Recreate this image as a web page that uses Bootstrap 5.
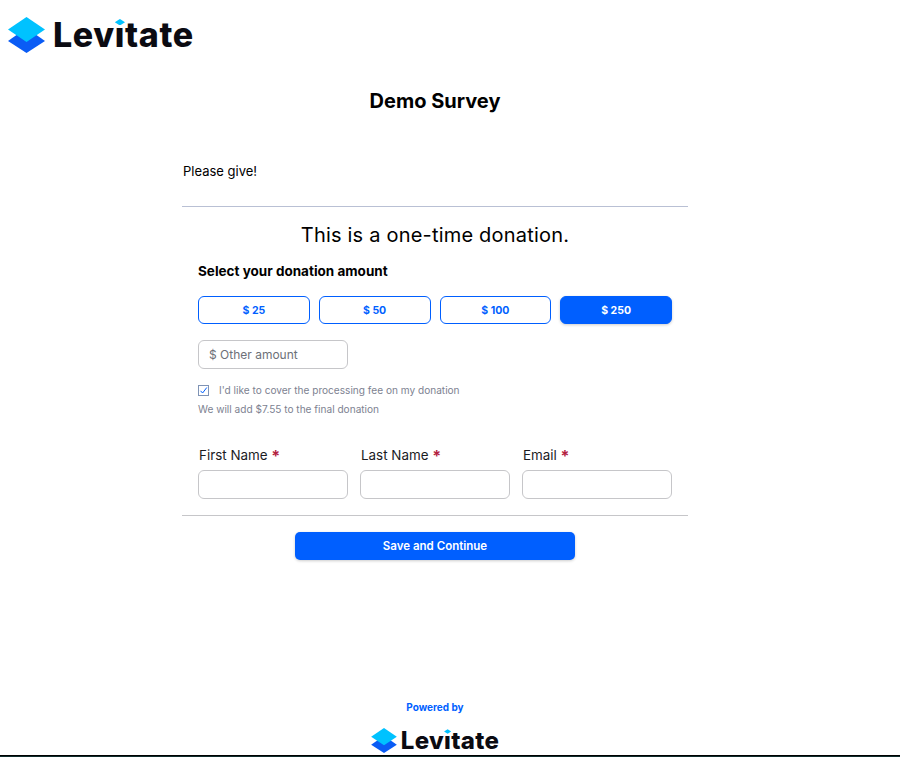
<!DOCTYPE html>
<html lang="en">
<head>
    <meta charset="UTF-8">
    <meta name="viewport" content="width=device-width, initial-scale=1.0">
    <title>Demo Survey</title>
    <link href="https://cdn.jsdelivr.net/npm/bootstrap@5.3.0/dist/css/bootstrap.min.css" rel="stylesheet">
    <style>
        html, body { height: 757px; overflow: hidden; }
        body { background: #fff; color: #000; font-family: "Inter", "Liberation Sans", sans-serif; }
        .page-wrap { width: 870px; height: 755px; }
        .top-logo { padding: 17px 0 0 8px; height: 72px; gap: 8px; }
        .top-logo svg { width: 37px; height: 36px; }
        .logo-word { font-weight: 800; color: #0b0b12; line-height: 1; letter-spacing: .6px; }
        .top-logo .logo-word { font-size: 34px; margin-top: 1px; }
        .logo-i { position: relative; display: inline-block; }
        .logo-i::before { content: ""; position: absolute; left: -1px; right: -1px; top: .02em; height: .24em; background: #fff; }
        .logo-i::after { content: ""; position: absolute; left: 50%; top: .03em; width: .3em; height: .19em; margin-left: -.15em; background: #00c2ff; clip-path: polygon(50% 0, 100% 50%, 50% 100%, 0 50%); }
        .survey-title { font-size: 20px; font-weight: 700; line-height: 24px; margin: 17px 0 0; text-align: center; }
        .survey-col { width: 506px; margin: 0 auto; }
        .intro-text { font-size: 13px; line-height: 17px; margin: 50px 0 26px 1px; }
        .rule-top { border-top: 1px solid #b9c0d4; }
        .once-text { font-size: 20px; line-height: 24px; text-align: center; margin: 16px 0 0; letter-spacing: .2px; }
        .form-body { padding: 0 16px; }
        .select-label { font-size: 13.5px; font-weight: 700; line-height: 16px; margin: 16px 0 17px; }
        .amount-row { gap: 9px; }
        .amount-btn { flex: 1; height: 28px; padding: 1px 0 0; font-size: 10.5px; font-weight: 700; color: #005fff; background: #fff; border: 1px solid #005fff; border-radius: 6px; }
        .amount-btn.picked { background: #005fff; color: #fff; box-shadow: 0 1px 3px rgba(0,0,0,.2); }
        .field-box { height: 29px; border: 1px solid #c6c6c9; border-radius: 6px; font-size: 12px; padding: 0 10px; box-shadow: none; }
        .field-box::placeholder { color: #6d7078; opacity: 1; }
        .other-box { width: 150px; margin-top: 16px; }
        .fee-row { margin-top: 14px; gap: 10px; font-size: 10.1px; line-height: 14px; color: #7d8291; }
        .fee-check { width: 11px; height: 11px; border: 1px solid #7f93b5; display: flex; }
        .fee-note { font-size: 10.1px; line-height: 14px; color: #7d8291; margin: 5px 0 0; }
        .name-row { margin-top: 30px; gap: 12px; }
        .name-row > div { flex: 1; }
        .name-label { display: block; font-size: 13.4px; line-height: 18px; margin-bottom: 6px; color: #1b1b1f; padding-left: 1px; }
        .req-star { color: #b3213f; font-weight: 700; font-size: 16px; line-height: 1; vertical-align: -2px; }
        .rule-bottom { border-top: 1px solid #c6c6c9; margin-top: 16px; }
        .save-btn { display: block; width: 280px; height: 28px; margin: 16px auto 0; padding: 1px 0 0; font-size: 11.5px; font-weight: 600; color: #fff; background: #005fff; border: 0; border-radius: 5px; box-shadow: 0 1px 3px rgba(0,0,0,.2); }
        .foot-block { margin-top: 141px; text-align: center; }
        .powered-text { font-size: 10px; font-weight: 700; line-height: 12px; color: #005fff; }
        .foot-logo { margin-top: 14px; gap: 4px; height: 27px; }
        .foot-logo svg { width: 26px; height: 25px; }
        .foot-logo .logo-word { font-size: 24px; letter-spacing: .3px; }
        .bottom-strip { height: 2px; background: #000; border-bottom: 1px solid #0f2c2c; }
    </style>
</head>
<body>

    <div class="page-wrap d-flex flex-column">
        <!-- Logo -->
        <div class="top-logo d-flex align-items-start">
            <svg viewBox="0 0 37 36"><path d="M18.5 11 37 24 18.5 36 0 24z" fill="#0a5cf5"/><path d="M18.5 0 37 12.500 18.500 25 0 12.500z" fill="#00c2ff"/></svg>
            <span class="logo-word">Lev<span class="logo-i">i</span>tate</span>
        </div>

        <h1 class="survey-title">Demo Survey</h1>

        <div class="survey-col">
            <p class="intro-text">Please give!</p>
            <div class="rule-top"></div>
            <p class="once-text">This is a one-time donation.</p>

            <div class="form-body">
                <p class="select-label">Select your donation amount</p>
                <div class="amount-row d-flex">
                    <button class="btn amount-btn">$ 25</button>
                    <button class="btn amount-btn">$ 50</button>
                    <button class="btn amount-btn">$ 100</button>
                    <button class="btn amount-btn picked">$ 250</button>
                </div>
                <input class="form-control field-box other-box" placeholder="$ Other amount">
                <div class="fee-row d-flex align-items-center">
                    <span class="fee-check">
                        <svg viewBox="0 0 9 9" width="9" height="9"><path d="M1.500 4.800 3.600 7 7.800 1.500" fill="none" stroke="#005fff" stroke-width="1"/></svg>
                    </span>
                    <span>I'd like to cover the processing fee on my donation</span>
                </div>
                <p class="fee-note">We will add $7.55 to the final donation</p>

                <div class="name-row d-flex">
                    <div>
                        <label class="name-label">First Name <span class="req-star">*</span></label>
                        <input class="form-control field-box">
                    </div>
                    <div>
                        <label class="name-label">Last Name <span class="req-star">*</span></label>
                        <input class="form-control field-box">
                    </div>
                    <div>
                        <label class="name-label">Email <span class="req-star">*</span></label>
                        <input class="form-control field-box">
                    </div>
                </div>
            </div>
            <div class="rule-bottom"></div>
            <button class="btn save-btn">Save and Continue</button>
        </div>

        <!-- Footer -->
        <div class="foot-block">
            <div class="powered-text">Powered by</div>
            <div class="foot-logo d-flex justify-content-center align-items-center">
                <svg viewBox="0 0 37 36"><path d="M18.5 11 37 24 18.5 36 0 24z" fill="#0a5cf5"/><path d="M18.5 0 37 12.500 18.500 25 0 12.500z" fill="#00c2ff"/></svg>
                <span class="logo-word">Lev<span class="logo-i">i</span>tate</span>
            </div>
        </div>
    </div>
    <div class="bottom-strip"></div>

    <script src="https://cdn.jsdelivr.net/npm/bootstrap@5.3.0/dist/js/bootstrap.bundle.min.js"></script>
</body>
</html>
